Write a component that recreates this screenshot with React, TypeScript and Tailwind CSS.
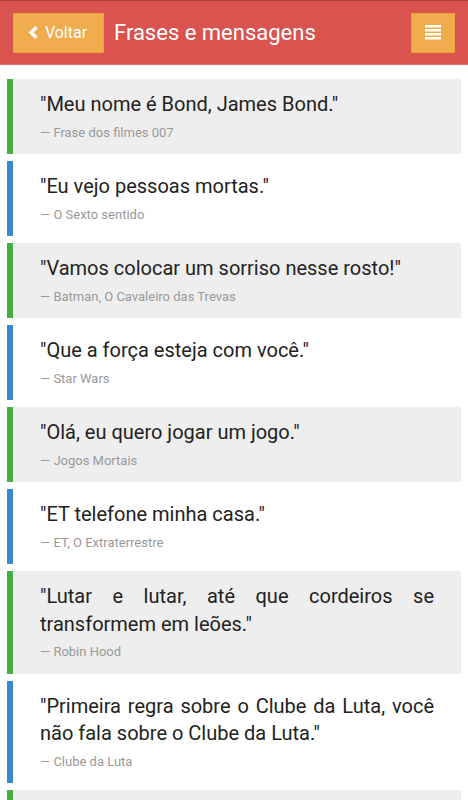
import React from 'react';

type Quote = {
  text: string;
  author: string;
};

const quotes: Quote[] = [
  { text: '"Meu nome é Bond, James Bond."', author: 'Frase dos filmes 007' },
  { text: '"Eu vejo pessoas mortas."', author: 'O Sexto sentido' },
  { text: '"Vamos colocar um sorriso nesse rosto!"', author: 'Batman, O Cavaleiro das Trevas' },
  { text: '"Que a força esteja com você."', author: 'Star Wars' },
  { text: '"Olá, eu quero jogar um jogo."', author: 'Jogos Mortais' },
  { text: '"ET telefone minha casa."', author: 'ET, O Extraterrestre' },
  { text: '"Lutar e lutar, até que cordeiros se transformem em leões."', author: 'Robin Hood' },
  { text: '"Primeira regra sobre o Clube da Luta, você não fala sobre o Clube da Luta."', author: 'Clube da Luta' },
  { text: '"Eu voltarei."', author: 'O Exterminador do Futuro' },
];

const App: React.FC = () => {
  return (
    <div className="min-h-screen w-full bg-white font-['Roboto','Liberation_Sans',sans-serif]">
      {/* Header */}
      <header className="flex h-[65px] items-center border-t border-b border-t-[#a8403c] border-b-[#e5736f] bg-[#d9534f] px-[13px]">
        <button className="flex h-[40px] w-[91px] items-center justify-center gap-[6px] border border-[#eea236] bg-[#f0ad4e] pr-[2px] text-[16px] text-white">
          <svg width="11" height="13" viewBox="0 0 11 13" className="mt-[-1px]">
            <path d="M8.5 1.2 L3 6.5 L8.5 11.8" fill="none" stroke="white" strokeWidth="3.4" strokeLinejoin="miter" />
          </svg>
          Voltar
        </button>
        <h1 className="ml-[10px] text-[22px] leading-none text-white">Frases e mensagens</h1>
        <button className="ml-auto flex h-[40px] w-[44px] items-center justify-center border border-[#eea236] bg-[#f0ad4e]">
          <svg width="16" height="15" viewBox="0 0 16 15">
            <rect x="0" y="0" width="16" height="2.5" fill="white" />
            <rect x="0" y="4" width="16" height="2.5" fill="white" />
            <rect x="0" y="8" width="16" height="2.5" fill="white" />
            <rect x="0" y="12" width="16" height="2.5" fill="white" />
          </svg>
        </button>
      </header>

      {/* Quote list */}
      <div className="flex flex-col gap-[7px] px-[7px] pt-[14px]">
        {quotes.map((q, i) => (
          <blockquote
            key={i}
            className={
              i % 2 === 0
                ? 'border-l-[6px] border-[#44ae44] bg-[#eeeeee] pt-[12px] pr-[27px] pb-[12px] pl-[27px]'
                : 'border-l-[6px] border-[#3a88c9] bg-white pt-[12px] pr-[27px] pb-[12px] pl-[27px]'
            }
          >
            <p className="text-justify text-[20px] leading-[27.5px] text-[#222222]">{q.text}</p>
            <footer className="mt-[5px] text-[13px] leading-[18.5px] text-[#999999]">— {q.author}</footer>
          </blockquote>
        ))}
      </div>
    </div>
  );
};

export default App;
